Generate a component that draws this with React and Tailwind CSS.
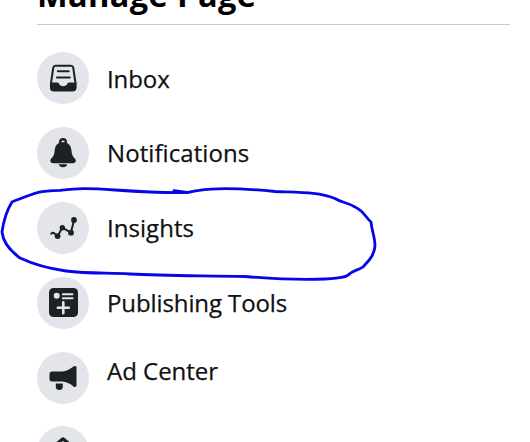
import React from "react";

const INK = "#1c2125";

function InboxIcon() {
  return (
    <svg viewBox="0 0 52 52" className="size-[52px]" fill="none" stroke={INK} strokeLinecap="round" strokeLinejoin="round">
      <path d="M18.5 13.700h15.400c1.200 0 2 .7 2.300 1.800l2.300 15.500v4.500a3 3 0 0 1-3 3H17a3 3 0 0 1-3-3V31l2.300-15.500c.3-1.100 1-1.800 2.200-1.800Z" strokeWidth="2" />
      <path d="M13.200 30.600h6.600c1.400 0 2 .5 2.400 1.500.6 1.300 2 2.200 4 2.200s3.400-.9 4-2.200c.4-1 1-1.500 2.400-1.500h6.700v5.200c0 2-1.300 3.300-3.300 3.300H16.500c-2 0-3.300-1.300-3.300-3.300Z" fill={INK} stroke="none" />
      <path d="M20.800 19.200h10.900M19.900 25.500h12.900" strokeWidth="2" />
    </svg>
  );
}

function BellIcon() {
  return (
    <svg viewBox="0 0 52 52" className="size-[52px]" fill={INK}>
      <path d="M26 11a4 4 0 0 1 4 4v.9c2.800 1.400 4.300 4.200 4.500 7.900.2 3.700 1.200 5.700 3.300 7.800 1 1.100 1.200 2.200.8 3.200-.4.900-1.300 1.400-2.500 1.400H16c-1.200 0-2.100-.5-2.500-1.400-.4-1-.2-2.100.8-3.200 2.100-2.100 3.100-4.100 3.300-7.800.2-3.700 1.700-6.500 4.400-7.900V15a4 4 0 0 1 4-4Z" />
      <path d="M24.200 15.200a1.800 1.800 0 0 1 3.600 0Z" fill="#e4e5eb" />
      <path d="M21.800 37.300h8.400c-.3 1.900-2 3-4.200 3s-3.900-1.100-4.200-3Z" />
    </svg>
  );
}

function InsightsIcon() {
  return (
    <svg viewBox="0 0 52 52" className="size-[52px]" fill={INK}>
      <path d="M14.200 31.800c.9-1.300 2.300-1.700 3.400-.2l2.900 2.900 4.800-8.900 8.600 5L37 18.400" fill="none" stroke={INK} strokeWidth="2" strokeLinecap="round" strokeLinejoin="round" />
      <circle cx="20.6" cy="34.1" r="2.9" />
      <circle cx="25.3" cy="25.7" r="2.7" />
      <circle cx="34" cy="30.7" r="2.9" />
      <circle cx="37" cy="18" r="2.9" />
    </svg>
  );
}

function PublishingIcon() {
  return (
    <svg viewBox="0 0 52 52" className="size-[52px]">
      <rect x="12" y="11" width="29" height="29" rx="4.5" fill={INK} />
      <circle cx="19.7" cy="18.8" r="3" fill="#e4e5eb" />
      <path d="M25.800 17.200h9.700M25.800 21.300h9.700" stroke="#e4e5eb" strokeWidth="2" strokeLinecap="round" />
      <path d="M26.300 25.200v11M20.800 30.700h11" stroke="#e4e5eb" strokeWidth="2.6" strokeLinecap="round" />
    </svg>
  );
}

function MegaphoneIcon() {
  return (
    <svg viewBox="0 0 52 52" className="size-[52px]" fill={INK}>
      <path d="M15 19.500h10.500c3.500-.2 7-1.800 11-4.900 1.500-1 3-.5 3 1.200v17.400c0 1.700-1.500 2.200-3 1.200-4-3.100-7.500-4.600-11-4.900H15a2.500 2.500 0 0 1-2.500-2.500v-5a2.500 2.500 0 0 1 2.500-2.500Z" />
      <path d="M18.800 31.500h7v3a3.500 3.500 0 0 1-7 0Z" />
    </svg>
  );
}

function HomeIcon() {
  return (
    <svg viewBox="0 0 52 52" className="size-[52px]" fill={INK}>
      <path d="M24 12.200c1.300-1.200 2.700-1.200 4 0l10 8.500V39H14V20.700Z" />
      <path d="m26 15 7 5.600v4H19v-4Z" fill="#e4e5eb" />
    </svg>
  );
}

const items = [
  { label: "Inbox", Icon: InboxIcon, text: "mt-[9.5px] tracking-[-0.08px]" },
  { label: "Notifications", Icon: BellIcon, text: "mt-[9.5px] tracking-[0.08px]" },
  { label: "Insights", Icon: InsightsIcon, text: "mt-[9.5px] tracking-[0.05px]" },
  { label: "Publishing Tools", Icon: PublishingIcon, text: "mt-[9.5px] tracking-[-0.1px]" },
  { label: "Ad Center", Icon: MegaphoneIcon, text: "mt-[2.5px] tracking-[-0.02px]" },
  { label: "", Icon: HomeIcon, text: "" },
];

export default function App() {
  return (
    <main className="relative h-[442px] w-[530px] overflow-hidden bg-white font-['Open_Sans','Noto_Sans',sans-serif] text-[#101112]">
      <header className="ml-[37px] flex h-[25px] w-[473px] items-end border-b border-[#c9cacb]">
        <h1 className="mb-[12px] whitespace-nowrap text-[32.5px] leading-[34px] font-bold tracking-[0.4px] text-black">Manage Page</h1>
      </header>
      <ul className="mt-[27px] ml-[37px] flex flex-col gap-[22.9px]">
        {items.map(({ label, Icon, text }, i) => (
          <li key={i} className="flex h-[52px] items-start gap-[18px]">
            <span className="size-[52px] shrink-0 rounded-full bg-[#e4e5eb]">
              <Icon />
            </span>
            <span className={"whitespace-nowrap text-[24px] leading-[34px] font-medium [-webkit-text-stroke:0.25px_#101112] " + text}>{label}</span>
          </li>
        ))}
      </ul>
      <svg viewBox="0 0 530 442" className="pointer-events-none absolute inset-0 h-[442px] w-[530px]" fill="none" stroke="#0606e8" strokeWidth="2.8" strokeLinecap="round" strokeLinejoin="round">
        <path d="M174 190.700L187 192.500C160 193 137 191.500 115 190C85 188 78 188.500 60 190.300C38 191 37 192 12 202C7 210 4 218 2 232C3 241 9 250 20 258C35 265 52 269 66 271C90 274 110 272.500 130 274C165 276 205 275.500 245 276.500C275 279 305 280 325 279C342 278 347 277 350 273.500C354 270 359 270 363 267C369 260 374 256 375 246C375 237 372 232 371 222C366 218 364 211 355 207C347 202 342 203 335 198.500C319 192 302 192.500 275 191.500C250 189 220 187 199 190.300C193 191 190 192.500 187 192.500" />
      </svg>
    </main>
  );
}
